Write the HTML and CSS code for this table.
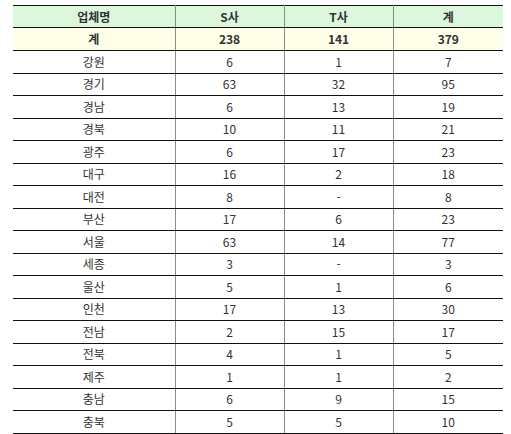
FILE: index.html
```html
<!DOCTYPE html>
<html lang="ko">
<head>
<meta charset="utf-8">
<link rel="stylesheet" href="styles.css">
</head>
<body>
<table class="stats">
  <colgroup>
    <col class="c1"><col class="c2"><col class="c3"><col class="c4">
  </colgroup>
  <thead>
    <tr class="head"><th>업체명</th><th>S사</th><th>T사</th><th>계</th></tr>
  </thead>
  <tbody>
    <tr class="total"><td>계</td><td>238</td><td>141</td><td>379</td></tr>
    <tr><td>강원</td><td>6</td><td>1</td><td>7</td></tr>
    <tr><td>경기</td><td>63</td><td>32</td><td>95</td></tr>
    <tr><td>경남</td><td>6</td><td>13</td><td>19</td></tr>
    <tr><td>경북</td><td>10</td><td>11</td><td>21</td></tr>
    <tr><td>광주</td><td>6</td><td>17</td><td>23</td></tr>
    <tr><td>대구</td><td>16</td><td>2</td><td>18</td></tr>
    <tr><td>대전</td><td>8</td><td>-</td><td>8</td></tr>
    <tr><td>부산</td><td>17</td><td>6</td><td>23</td></tr>
    <tr><td>서울</td><td>63</td><td>14</td><td>77</td></tr>
    <tr><td>세종</td><td>3</td><td>-</td><td>3</td></tr>
    <tr><td>울산</td><td>5</td><td>1</td><td>6</td></tr>
    <tr><td>인천</td><td>17</td><td>13</td><td>30</td></tr>
    <tr><td>전남</td><td>2</td><td>15</td><td>17</td></tr>
    <tr><td>전북</td><td>4</td><td>1</td><td>5</td></tr>
    <tr><td>제주</td><td>1</td><td>1</td><td>2</td></tr>
    <tr><td>충남</td><td>6</td><td>9</td><td>15</td></tr>
    <tr><td>충북</td><td>5</td><td>5</td><td>10</td></tr>
  </tbody>
</table>
</body>
</html>
```

FILE: styles.css
```css
html, body {
  margin: 0;
  padding: 0;
  background: #ffffff;
}
body {
  padding: 5px 0 0 13px;
  font-family: "Noto Sans CJK KR", "Noto Sans", sans-serif;
  font-size: 12px;
  color: #333333;
}
.stats {
  border-collapse: collapse;
  width: 490px;
  table-layout: fixed;
}
.c1 { width: 162px; }
.c2 { width: 109px; }
.c3 { width: 109px; }
.c4 { width: 110px; }
.stats th,
.stats td {
  text-align: center;
  padding: 0;
  height: 21.5px;
  line-height: 20px;
  border-top: 1px solid #111111;
  border-bottom: 1px solid #111111;
  border-left: 1px solid #8a8a8a;
  border-right: 1px solid #8a8a8a;
  font-weight: normal;
}
.stats tr > :first-child { border-left: none; }
.stats tr > :last-child { border-right: none; }
.head th {
  background: #dbf7dc;
  font-weight: bold;
  height: 21px;
}
.total td {
  background: #fffee8;
  font-weight: bold;
  height: 22px;
}
```
